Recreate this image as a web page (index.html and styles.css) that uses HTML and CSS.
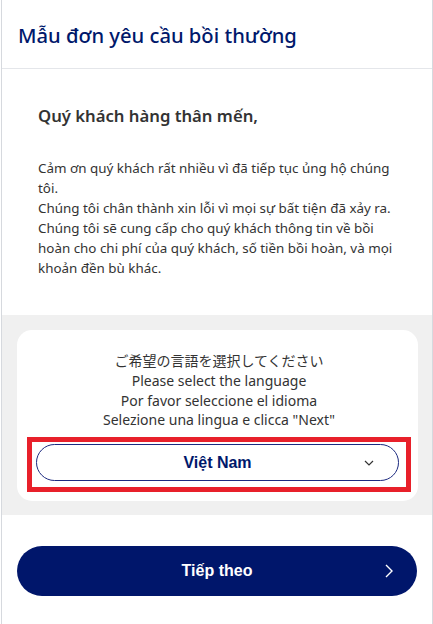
FILE: index.html
```html
<!DOCTYPE html>
<html lang="vi">
  <head>
    <meta charset="UTF-8" />
    <meta name="viewport" content="width=device-width, initial-scale=1.0" />
    <title>Mẫu đơn yêu cầu bồi thường</title>
    <link rel="stylesheet" href="styles.css">
  </head>
  <body>
    <div class="page">
      <header class="header">
        <h1>Mẫu đơn yêu cầu bồi thường</h1>
      </header>

      <section class="intro">
        <h2>Quý khách hàng thân mến,</h2>
        <p>
          Cảm ơn quý khách rất nhiều vì đã tiếp tục ủng hộ chúng tôi.<br />
          Chúng tôi chân thành xin lỗi vì mọi sự bất tiện đã xảy ra.<br />
          Chúng tôi sẽ cung cấp cho quý khách thông tin về bồi hoàn cho chi
          phí của quý khách, số tiền bồi hoàn, và mọi khoản đền bù khác.
        </p>
      </section>

      <section class="lang">
        <div class="lang-card">
          <p class="lang-ja">ご希望の言語を選択してください</p>
          <p>Please select the language</p>
          <p>Por favor seleccione el idioma</p>
          <p>Selezione una lingua e clicca "Next"</p>
          <div class="select-frame">
            <div class="select">
              <span>Việt Nam</span>
              <svg class="select-arrow" width="10" height="6" viewBox="0 0 10 6">
                <path d="M1 1l4 4 4-4" fill="none" stroke="#333" stroke-width="1.2" />
              </svg>
            </div>
          </div>
        </div>
      </section>

      <div class="actions">
        <button class="next">
          <span>Tiếp theo</span>
          <svg class="next-arrow" width="8" height="14" viewBox="0 0 8 14">
            <path d="M1 1l6 6-6 6" fill="none" stroke="#fff" stroke-width="1.4" />
          </svg>
        </button>
      </div>
    </div>
  </body>
</html>
```

FILE: styles.css
```css
* {
  margin: 0;
  padding: 0;
  box-sizing: border-box;
}
body {
  background: #fff;
  color: #333;
  font-family: "Noto Sans", "Noto Sans CJK JP", sans-serif;
}
.page {
  margin-left: 1px;
  width: 432px;
  min-height: 624px;
  border-left: 1px solid #d6d9de;
  border-right: 1px solid #d6d9de;
}

/* 页眉 */
.header {
  height: 69px;
  display: flex;
  align-items: center;
  padding-left: 16px;
  border-bottom: 1px solid #e4e6ea;
}
.header h1 {
  font-size: 20.2px;
  font-weight: 500;
  color: #00186b;
  margin-top: 2px;
}

/* 问候 */
.intro {
  padding: 35px 32px 37px 36px;
}
.intro h2 {
  font-size: 16.7px;
  font-weight: 600;
  color: #333;
  line-height: 24px;
}
.intro p {
  margin-top: 30px;
  font-size: 13.4px;
  line-height: 20px;
  color: #333;
}

/* 语言选择 */
.lang {
  background: #f0f0f0;
  padding: 15px 14px 14px 15px;
}
.lang-card {
  background: #fff;
  border-radius: 15px;
  padding: 20px 7px 9px 10px;
  text-align: center;
}
.lang-card p {
  font-size: 14px;
  line-height: 19.5px;
  color: #333;
}
.lang-card .lang-ja {
  font-size: 14px;
  line-height: 21px;
}
.select-frame {
  margin-top: 7.5px;
  border: 5px solid #e8202a;
  padding: 2px 7px 6px 4px;
}
.select {
  height: 37px;
  border: 1px solid #1c2a80;
  border-radius: 19px;
  display: flex;
  align-items: center;
  justify-content: center;
  position: relative;
  font-family: "Liberation Sans", Arial, sans-serif;
  font-weight: bold;
  font-size: 16px;
  color: #00186b;
}
.select-arrow {
  position: absolute;
  right: 24px;
  top: 15px;
}

/* 按钮 */
.actions {
  padding: 31px 15px;
}
.next {
  width: 400px;
  height: 50px;
  border: none;
  border-radius: 25px;
  background: #00166b;
  color: #fff;
  font-family: "Liberation Sans", Arial, sans-serif;
  font-weight: bold;
  font-size: 16px;
  display: flex;
  align-items: center;
  justify-content: center;
  position: relative;
}
.next-arrow {
  position: absolute;
  right: 24px;
  top: 18px;
}
```
